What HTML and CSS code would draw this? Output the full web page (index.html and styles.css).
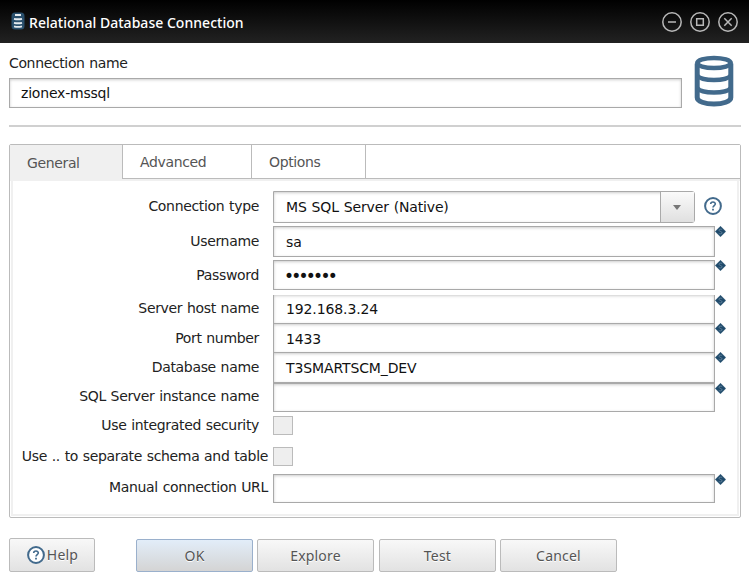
FILE: index.html
```
<!DOCTYPE html>
<html lang="en">
<head>
<meta charset="utf-8">
<title>Relational Database Connection</title>
<link rel="stylesheet" href="styles.css">
</head>
<body>
<svg class="defs" width="0" height="0">
  <defs>
    <symbol id="db" viewBox="0 0 40 52">
      <path d="M3.2 8.5V42.5C3.2 46.5 11 49 20 49S36.8 46.5 36.8 42.5V8.5" fill="#fff" stroke="#426a8c" stroke-width="5"/>
      <ellipse cx="20" cy="8" rx="16.8" ry="5" fill="#fff" stroke="#426a8c" stroke-width="4.4"/>
      <path d="M3 20.5C6 24 13 25 20 25S34 24 37 20.5M3 33C6 36.5 13 37.5 20 37.5S34 36.5 37 33" fill="none" stroke="#426a8c" stroke-width="4.4"/>
    </symbol>
    <symbol id="help" viewBox="0 0 18 18">
      <circle cx="9" cy="9" r="7.9" fill="#fff" stroke="#426a8c" stroke-width="2"/>
      <path d="M6.7 7C6.8 4.2 11.4 4.4 11.3 7C11.2 8.6 9 8.7 9 10.6" fill="none" stroke="#426a8c" stroke-width="1.6"/>
      <path d="M8.1 11.8h1.8v1.7h-1.8z" fill="#426a8c"/>
    </symbol>
    <symbol id="param" viewBox="0 0 12 12">
      <path d="M6 .3L11.7 6L6 11.7L.3 6z" fill="#1f4a6b" stroke="#1f4a6b" stroke-width=".5"/>
      <path d="M7.8 4C6.8 3 4.4 3.2 4.4 4.7C4.4 6.2 7.7 5.8 7.7 7.4C7.7 8.9 5.2 9 4.1 8" fill="none" stroke="#6b8ba4" stroke-width=".9"/>
    </symbol>
  </defs>
</svg>
<header class="titlebar">
  <svg class="title-icon" viewBox="0 0 14 18">
    <rect x=".5" y=".5" width="13" height="17" rx="3.5" fill="#294f6c"/>
    <path d="M4 3h6M3 6.8q4 1 8 0M3 10.8q4 1 8 0M3 14.3q4 1.2 8 0" fill="none" stroke="#e4eaee" stroke-width="1.9"/>
  </svg>
  <h1>Relational Database Connection</h1>
  <div class="controls">
    <svg viewBox="0 0 20 20"><circle cx="10" cy="10" r="9.2"/><path d="M6 10h8"/></svg>
    <svg viewBox="0 0 20 20"><circle cx="10" cy="10" r="9.2"/><path d="M6.7 6.7h6.6v6.6H6.7z"/></svg>
    <svg viewBox="0 0 20 20"><circle cx="10" cy="10" r="9.2"/><path d="M6.3 6.3l7.4 7.4M13.7 6.3l-7.4 7.4"/></svg>
  </div>
</header>
<main>
  <section class="name">
    <div class="name-field">
      <div class="name-label">Connection name</div>
      <div class="input">zionex-mssql</div>
    </div>
    <svg class="db-icon"><use href="#db"/></svg>
  </section>
  <section class="panel">
    <nav class="tabs">
      <div class="tab general">General</div>
      <div class="tab advanced">Advanced</div>
      <div class="tab options">Options</div>
      <div class="tab rest"></div>
    </nav>
    <div class="form">
      <div class="row r-type"><label>Connection type</label><div class="select"><span>MS SQL Server (Native)</span><i></i></div><svg class="help-icon"><use href="#help"/></svg></div>
      <div class="row r-user"><label>Username</label><div class="input">sa</div><svg class="param"><use href="#param"/></svg></div>
      <div class="row r-pass"><label>Password</label><div class="input"><span class="dots">•••••••</span></div><svg class="param"><use href="#param"/></svg></div>
      <div class="row r-host"><label>Server host name</label><div class="input">192.168.3.24</div><svg class="param"><use href="#param"/></svg></div>
      <div class="row r-port"><label>Port number</label><div class="input">1433</div><svg class="param"><use href="#param"/></svg></div>
      <div class="row r-db"><label>Database name</label><div class="input">T3SMARTSCM_DEV</div><svg class="param"><use href="#param"/></svg></div>
      <div class="row r-inst"><label>SQL Server instance name</label><div class="input"></div><svg class="param"><use href="#param"/></svg></div>
      <div class="row r-sec"><label>Use integrated security</label><div class="check"></div></div>
      <div class="row r-sep wide"><label>Use .. to separate schema and table</label><div class="check"></div></div>
      <div class="row r-url wide"><label>Manual connection URL</label><div class="input"></div><svg class="param"><use href="#param"/></svg></div>
    </div>
  </section>
  <footer>
    <div class="btn help"><svg class="help-icon"><use href="#help"/></svg>Help</div>
    <div class="btn ok">OK</div>
    <div class="btn explore">Explore</div>
    <div class="btn">Test</div>
    <div class="btn">Cancel</div>
  </footer>
</main>
</body>
</html>
```
FILE: styles.css
```
* { box-sizing: border-box; }
body { margin: 0; width: 749px; height: 583px; overflow: hidden; background: #fff; color: #222; font: 14px/20px "DejaVu Sans", sans-serif; letter-spacing: -.36px; word-spacing: .6px; }
.defs { position: absolute; }
svg { display: block; flex: none; }
.titlebar { display: flex; align-items: center; height: 43px; padding: 0 11px; background: linear-gradient(#000, #222); }
.title-icon { width: 14px; height: 18px; margin-top: -1px; }
h1 { margin: 3px 0 0 4px; font: 500 14px/20px "Noto Sans", sans-serif; color: #fff; letter-spacing: .03px; word-spacing: 0; }
.controls { display: flex; gap: 8px; margin: 0 0 0 auto; }
.controls svg { width: 20px; height: 20px; fill: none; stroke: #b8b8b8; stroke-width: 1.5; }
main { padding: 0 8px 0 9px; }
.name { display: flex; height: 84px; border-bottom: 2px solid #d0d0d0; }
.name-field { width: 673px; padding-top: 10px; }
.name-label { height: 25px; }
.input { border: 1px solid #a9a9a9; box-shadow: inset 0 1px 3px #ccc; padding-left: 12px; background: #fff; color: #111; letter-spacing: -.12px; }
.name .input { height: 30px; line-height: 29px; padding-left: 11px; letter-spacing: -.2px; }
.db-icon { width: 40px; height: 52px; margin: 12px 0 0 12px; }
.panel { margin-top: 17px; height: 374px; border: 1px solid #bbb; border-radius: 2px; }
.tabs { display: flex; height: 36px; color: #555; background: #f0f0f0; }
.tab { height: 34px; line-height: 34px; border-left: 1px solid #bbb; border-bottom: 1px solid #bbb; padding-left: 17px; background: #fff; }
.general { width: 112px; height: 36px; line-height: 36px; background: #f0f0f0; border: 0; }
.advanced { width: 129px; }
.options { width: 114px; }
.rest { flex: 1; }
.form { height: 335px; margin: 0 1px 1px; border: 2px solid #f0f0f0; border-top: 0; padding-top: 10px; }
.row { display: grid; grid-template-columns: 260px 442px 1fr; }
.row label { padding-right: 14px; text-align: right; white-space: nowrap; letter-spacing: -.33px; }
.row.wide label { padding-right: 5px; }
.param { width: 11px; height: 11px; }
.select { display: flex; width: 422px; height: 32px; border: 1px solid #a9a9a9; border-radius: 0 3px 3px 0; box-shadow: inset 0 1px 3px #ccc; padding-left: 12px; line-height: 31px; color: #111; letter-spacing: -.15px; }
.select i { display: flex; align-items: center; justify-content: center; width: 34px; margin-left: auto; padding-right: 1px; border-left: 1px solid #aaa; background: linear-gradient(#fafafa, #e0e0e0); }
.select i::after { content: ""; border: 4px solid transparent; border-top: 5px solid #777; border-bottom: 0; }
.help-icon { width: 18px; height: 18px; }
.r-type .help-icon { margin: 6px 0 0 -11px; }
.r-type { height: 35px; } .r-type label { padding-top: 5px; }
.r-user { height: 34px; } .r-user label { padding-top: 5px; } .r-user .input { height: 31px; line-height: 30px; }
.r-pass { height: 35px; } .r-pass label { padding-top: 5px; } .r-pass .input { height: 30px; line-height: 30px; }
.dots { font-size: 17px; letter-spacing: -2.75px; margin-left: -2px; }
.r-host { height: 28px; } .r-host label { padding-top: 3px; } .r-host .input { height: 28px; line-height: 28px; border-top: 0; border-bottom: 0; }
.r-port { height: 29px; } .r-port label { padding-top: 5px; } .r-port .input { height: 29px; line-height: 30px; border-bottom: 0; }
.r-db { height: 31px; } .r-db label { padding-top: 5px; } .r-db .input { height: 31px; line-height: 31px; }
.r-inst { height: 33px; } .r-inst label { padding-top: 3px; } .r-inst .input { height: 29px; }
.r-sec { height: 31px; } .r-sec label, .r-sep label { line-height: 19px; }
.r-sep { height: 27px; }
.check { width: 20px; height: 19px; border: 1px solid #bbb; background: #eee; }
.r-url label { padding-top: 3px; } .r-url .input { height: 29px; }
footer { display: flex; gap: 4px; align-items: flex-end; height: 54px; font-family: "Noto Sans", sans-serif; letter-spacing: .2px; }
.btn { width: 117px; height: 33px; line-height: 32px; text-align: center; border: 1px solid #bbb; border-radius: 2px; background: linear-gradient(#f8f8f8, #e2e2e2); color: #555; text-shadow: 0 1px #fff; }
.explore { margin-right: 1px; }
.help { display: flex; align-items: center; justify-content: center; width: 86px; height: 34px; gap: 2px; padding-left: 1px; margin-right: 37px; }
.ok { border-color: #9ab0cc; background: linear-gradient(#e2edf9, #d4d4d4); }
```
